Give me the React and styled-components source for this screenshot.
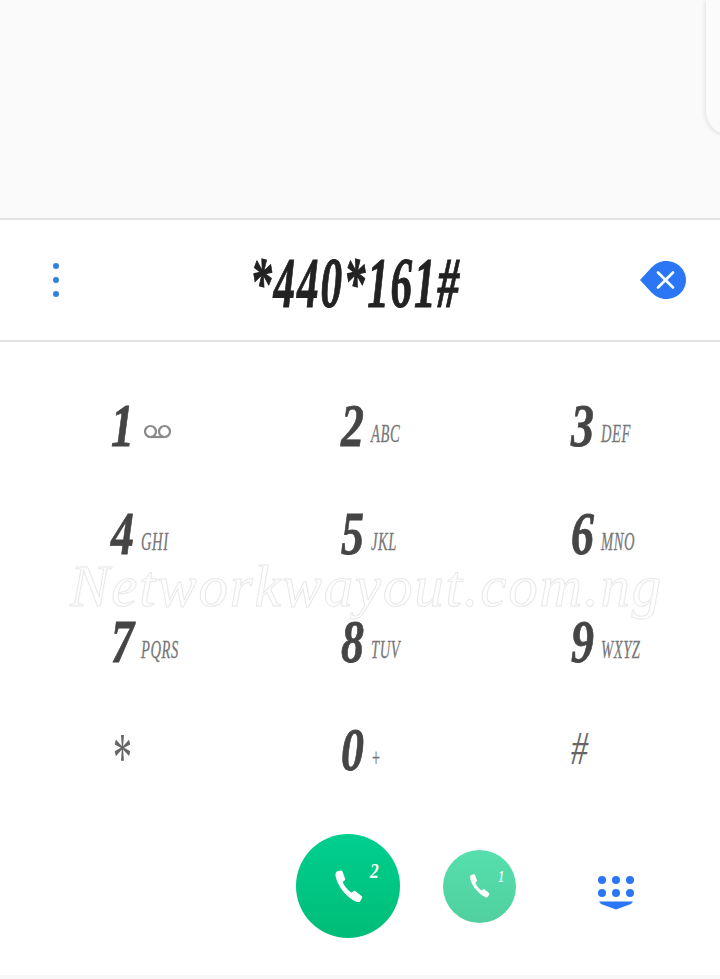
import React from "react";
import styled, { createGlobalStyle } from "styled-components";

const GlobalStyle = createGlobalStyle`
  html, body {
    margin: 0;
    padding: 0;
    background: #fff;
  }
`;

const KEYS = [
  { digit: "1", voicemail: true },
  { digit: "2", letters: "ABC" },
  { digit: "3", letters: "DEF" },
  { digit: "4", letters: "GHI" },
  { digit: "5", letters: "JKL" },
  { digit: "6", letters: "MNO" },
  { digit: "7", letters: "PQRS" },
  { digit: "8", letters: "TUV" },
  { digit: "9", letters: "WXYZ" },
  { digit: "*", symbol: true },
  { digit: "0", letters: "+" },
  { digit: "#", symbol: true },
];

const HANDSET =
  "M3 1.5 L7 .5 C8 .4 8.5 1 9 2 L11.5 9 C11.8 10 11.5 10.5 10.5 11.2 L9 12.5 C10.5 16.5 14 21 18 23.5 L20 22 C20.8 21.4 21.6 21.5 22.3 22 L28.5 27 C29.3 27.7 29.3 28.5 28.8 29.3 L27 32.5 C26.3 33.7 25 33.8 24 33.3 C14 29 5 19 2 8 C1.3 5 1.2 2.5 3 1.5Z";

const Handset = ({ size }) => (
  <svg width={size} height={(size * 34) / 30} viewBox="0 0 30 34">
    <path d={HANDSET} fill="#fff" />
  </svg>
);

const App = () => {
  return (
    <Page>
      <GlobalStyle />
      <TopArea>
        <PeekCard />
      </TopArea>
      <DisplayRow>
        <MenuDots>
          <Dot />
          <Dot />
          <Dot />
        </MenuDots>
        <Number>*440*161#</Number>
        <svg width="46" height="38" viewBox="0 0 46 38">
          <path
            d="M26 0 C37 0 46 8.5 46 19 C46 29.5 37 38 26 38 C20 38 16 35.5 12 32 L0 19 L12 6 C16 2.5 20 0 26 0Z"
            fill="#2b76f5"
          />
          <path d="M18 11.5 L33 26.5 M33 11.5 L18 26.5" stroke="#fff" strokeWidth="2.6" strokeLinecap="round" />
        </svg>
      </DisplayRow>
      <KeyGrid>
        {KEYS.map((key) => (
          <Key key={key.digit}>
            {key.symbol ? <Symbol $star={key.digit === "*"}>{key.digit}</Symbol> : <Digit>{key.digit}</Digit>}
            {key.letters && <Letters>{key.letters}</Letters>}
            {key.voicemail && (
              <VoicemailIcon width="29" height="15" viewBox="0 0 29 15">
                <circle cx="7.5" cy="7.5" r="5.5" />
                <circle cx="21.5" cy="7.5" r="5.5" />
                <path d="M7.5 13 H21.5" />
              </VoicemailIcon>
            )}
          </Key>
        ))}
      </KeyGrid>
      <Watermark>Networkwayout.com.ng</Watermark>
      <ActionRow>
        <CallButton $large>
          <Handset size={29} />
          <SimBadge $large>2</SimBadge>
        </CallButton>
        <CallButton>
          <Handset size={21} />
          <SimBadge>1</SimBadge>
        </CallButton>
        <KeypadToggle width="36" height="34" viewBox="0 0 36 34">
          {[4, 18, 32].map((x) =>
            [4, 17].map((y) => <circle key={`${x}-${y}`} cx={x} cy={y} r="4" fill="#2b76f5" />)
          )}
          <path d="M1 25.5 H35 L33 28 L18 33.5 L3 28Z" fill="#2b76f5" />
        </KeypadToggle>
      </ActionRow>
      <BottomEdge />
    </Page>
  );
};

export default App;

const Page = styled.div`
  position: relative;
  width: 720px;
  height: 979px;
  overflow: hidden;
  background: #fff;
  display: flex;
  flex-direction: column;
`;

const TopArea = styled.div`
  height: 218px;
  background: #fafafa;
  display: flex;
  justify-content: flex-end;
  align-items: flex-start;
`;

const PeekCard = styled.div`
  width: 24px;
  height: 135px;
  margin-right: -10px;
  background: #fbfbfb;
  border-bottom-left-radius: 24px;
  box-shadow: -1px 1px 4px rgba(0, 0, 0, 0.1);
`;

const DisplayRow = styled.div`
  box-sizing: border-box;
  border-top: 2px solid #e2e2e2;
  border-bottom: 2px solid #e2e2e2;
  height: 124px;
  padding: 0 34px 0 53px;
  display: flex;
  align-items: center;
  justify-content: space-between;
`;

const MenuDots = styled.div`
  display: flex;
  flex-direction: column;
  gap: 8px;
`;

const Dot = styled.span`
  width: 6px;
  height: 6px;
  border-radius: 50%;
  background: #3481e4;
`;

const Number = styled.div`
  font-family: "Liberation Serif", serif;
  font-weight: 700;
  font-style: italic;
  font-size: 72px;
  line-height: 1;
  letter-spacing: 3px;
  color: #222;
  transform: translateY(3px) scaleX(0.6);
  margin-left: 12px;
  -webkit-text-stroke: 1px #222;
`;

const KeyGrid = styled.div`
  display: grid;
  grid-template-columns: repeat(3, 230px);
  grid-auto-rows: 108px;
  padding: 29px 0 0 111px;
`;

const Key = styled.div`
  display: flex;
  align-items: center;
  height: 108px;
`;

const Digit = styled.span`
  display: inline-block;
  width: 30px;
  font-family: "Liberation Serif", serif;
  font-weight: 700;
  font-style: italic;
  font-size: 62px;
  line-height: 0.75;
  color: #454545;
  transform: scaleX(0.74);
  transform-origin: left center;
  -webkit-text-stroke: 0.8px #454545;
`;

const Symbol = styled.span`
  font-family: "Liberation Serif", serif;
  font-style: italic;
  font-size: ${(props) => (props.$star ? "70px" : "46px")};
  line-height: 0.75;
  color: #666;
  transform: ${(props) =>
    props.$star ? "translateY(9px) scaleX(0.55)" : "scaleX(0.74)"};
  transform-origin: left center;
`;

const Letters = styled.span`
  font-family: "Liberation Serif", serif;
  font-style: italic;
  font-size: 26px;
  line-height: 1;
  letter-spacing: 1px;
  margin-top: 18px;
  color: #777;
  white-space: nowrap;
  transform: scaleX(0.56);
  transform-origin: left center;
  -webkit-text-stroke: 0.3px #777;
`;

const VoicemailIcon = styled.svg`
  margin: 12px 0 0 2px;
  fill: none;
  stroke: #8a8a8a;
  stroke-width: 2.2;
`;

const Watermark = styled.div`
  position: absolute;
  left: 70px;
  top: 564px;
  font-family: "Liberation Serif", serif;
  font-style: italic;
  font-size: 59px;
  line-height: 0.75;
  color: #fff;
  white-space: nowrap;
  letter-spacing: 1.8px;
  -webkit-text-stroke: 1px #e8e8e8;
`;

const ActionRow = styled.div`
  display: flex;
  align-items: center;
  height: 104px;
  margin-top: 31px;
  padding-left: 296px;
`;

const CallButton = styled.div`
  position: relative;
  width: ${(props) => (props.$large ? "104px" : "73px")};
  height: ${(props) => (props.$large ? "104px" : "73px")};
  margin-right: ${(props) => (props.$large ? "43px" : "82px")};
  border-radius: 50%;
  display: flex;
  align-items: center;
  justify-content: center;
  background: ${(props) =>
    props.$large
      ? "linear-gradient(#00cf8f, #00bd78)"
      : "linear-gradient(#56dfae, #50d09e)"};
`;

const SimBadge = styled.span`
  position: absolute;
  top: ${(props) => (props.$large ? "26px" : "18px")};
  left: ${(props) => (props.$large ? "73px" : "54px")};
  font-family: "Liberation Serif", serif;
  font-weight: ${(props) => (props.$large ? 700 : 400)};
  font-style: italic;
  font-size: ${(props) => (props.$large ? "22px" : "17px")};
  line-height: 1;
  color: #fff;
  transform: scaleX(0.8);
`;

const KeypadToggle = styled.svg`
  margin-top: 14px;
`;

const BottomEdge = styled.div`
  position: absolute;
  left: 0;
  right: 0;
  bottom: 0;
  height: 4px;
  background: #f8f8f8;
`;
